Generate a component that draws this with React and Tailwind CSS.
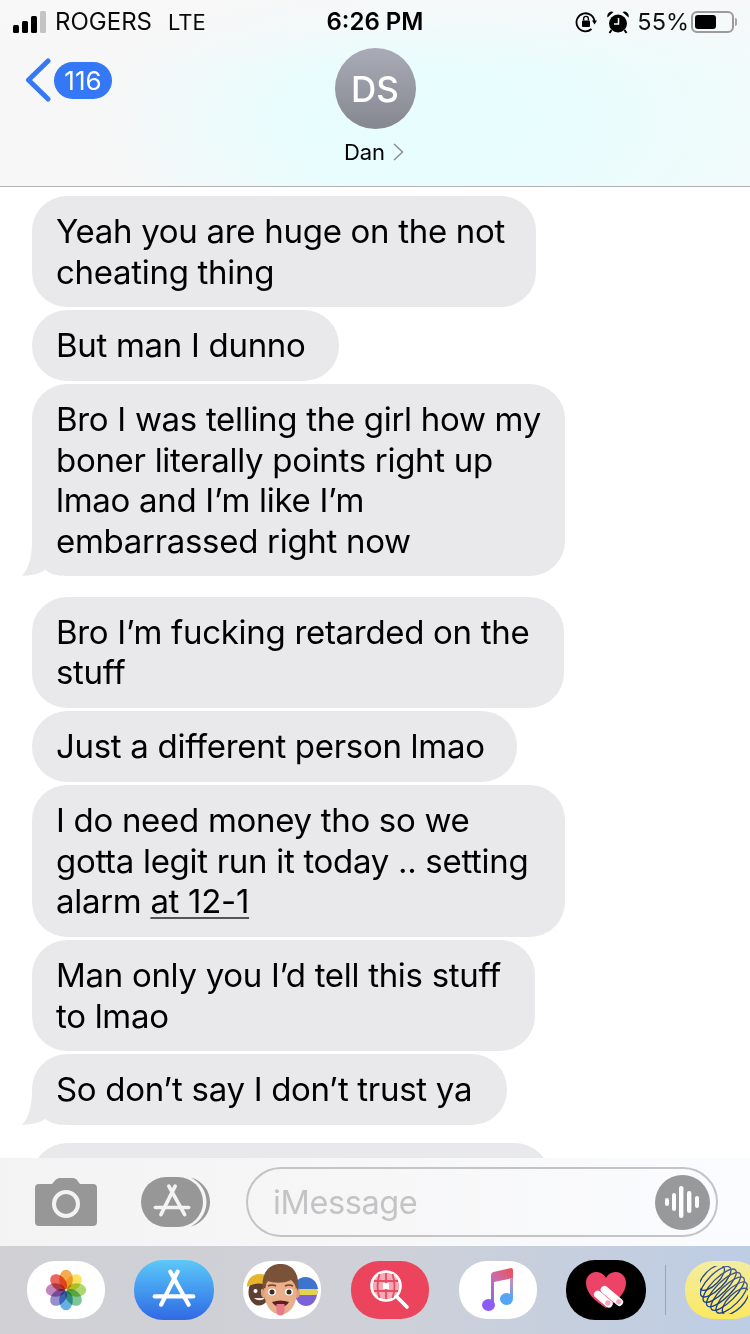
import React from "react";

const messages = [
  { w: "w-[504px]", lines: ["Yeah you are huge on the not", "cheating thing"], cls: "mb-[3px]" },
  { w: "w-[307px]", lines: ["But man I dunno"], cls: "mb-[3.5px]" },
  {
    w: "w-[533px]",
    lines: ["Bro I was telling the girl how my", "boner literally points right up", "lmao and I’m like I’m", "embarrassed right now"],
    cls: "mb-[20.5px]",
    tail: true,
  },
  { w: "w-[532px]", lines: ["Bro I’m fucking retarded on the", "stuff"], cls: "mb-[3.5px]" },
  { w: "w-[485px]", lines: ["Just a different person lmao"], cls: "mb-[3.5px]" },
  {
    w: "w-[533px]",
    lines: [
      "I do need money tho so we",
      "gotta legit run it today .. setting",
      <>
        alarm <span className="underline underline-offset-4 decoration-[#555] decoration-2">at 12-1</span>
      </>,
    ],
    cls: "mb-[3.5px]",
  },
  { w: "w-[503px]", lines: ["Man only you I’d tell this stuff", "to lmao"], cls: "mb-[3px]" },
  { w: "w-[475px]", lines: ["So don’t say I don’t trust ya"], cls: "mb-[18.5px]", tail: true },
];

function Tail() {
  return (
    <svg className="absolute left-[-10px] bottom-0" width="40" height="34" viewBox="0 0 40 34">
      <path d="M10 0 C10 14 7 27 0 33.6 C8 34 17 32 23 28 C27 31 32 33 40 34 L40 0 Z" fill="#e9e9eb" />
    </svg>
  );
}

function Bubble({ msg }) {
  return (
    <div className={`relative ${msg.w} ${msg.cls} bg-[#e9e9eb] rounded-[35px] pl-[24px] py-[15px] text-[33px] leading-[40.5px] tracking-[-0.3px] text-black`}>
      {msg.tail && <Tail />}
      <div className="relative whitespace-nowrap">
        {msg.lines.map((line, i) => (
          <div key={i}>{line}</div>
        ))}
      </div>
    </div>
  );
}

function SignalBars() {
  return (
    <svg width="34" height="22" viewBox="0 0 34 22">
      <rect x="0" y="14" width="6" height="8" rx="1.5" fill="#000" />
      <rect x="9" y="10" width="6" height="12" rx="1.5" fill="#000" />
      <rect x="18" y="5" width="6" height="17" rx="1.5" fill="#000" />
      <rect x="27" y="0" width="6" height="22" rx="1.5" fill="#c4c4c4" />
    </svg>
  );
}

function RotationLock() {
  return (
    <svg width="22" height="22" viewBox="0 0 22 22" fill="none">
      <path d="M19.5 11 A9 9 0 1 0 16.5 18" stroke="#000" strokeWidth="1.8" />
      <path d="M17 9.5 L22 9.5 L19.5 13.5 Z" fill="#000" />
      <rect x="7" y="9.5" width="8" height="6.5" rx="1" fill="#000" />
      <path d="M8.6 9.5 V7.8 a2.4 2.4 0 0 1 4.8 0 V9.5" stroke="#000" strokeWidth="1.4" />
    </svg>
  );
}

function Alarm() {
  return (
    <svg width="22" height="23" viewBox="0 0 22 23">
      <circle cx="11" cy="12.5" r="9" fill="#000" />
      <path d="M0.500 6.500 a4.500 4.500 0 0 1 6 -5.500 Z M21.500 6.500 a4.500 4.500 0 0 0 -6 -5.500 Z" fill="#000" />
      <path d="M4.500 19 L2.500 22 M17.500 19 L19.500 22" stroke="#000" strokeWidth="2" />
      <path d="M11.500 7 V13 H7" stroke="#fff" strokeWidth="1.500" fill="none" />
    </svg>
  );
}

function Battery() {
  return (
    <div className="flex items-center gap-[1px]">
      <div className="w-[43px] h-[22px] border-2 border-[#9b9b9b] rounded-[6px] p-[2px]">
        <div className="w-[21px] h-full bg-black rounded-[3px]" />
      </div>
      <div className="w-[2px] h-[8px] bg-[#a5a5a5] rounded-r-sm" />
    </div>
  );
}

function AppStoreGlyph({ size, color }) {
  return (
    <svg width={size} height={size} viewBox="0 0 48 48" fill="none" stroke={color} strokeWidth="4.600" strokeLinecap="round">
      <path d="M28 4 L10 40" />
      <path d="M20 4 L40 40" />
      <path d="M3 31 H45" />
    </svg>
  );
}

function AudioGlyph() {
  return (
    <svg width="38" height="34" viewBox="0 0 38 34" fill="#fff">
      <rect x="1" y="13" width="4" height="8" rx="2" />
      <rect x="8" y="8" width="4" height="18" rx="2" />
      <rect x="15" y="1" width="4.400" height="32" rx="2.200" />
      <rect x="23" y="6" width="4.400" height="22" rx="2.200" />
      <rect x="31" y="11" width="4" height="12" rx="2" />
    </svg>
  );
}

function Photos() {
  const petals = ["#f3a23c", "#f8e04e", "#a6d35f", "#6fc08a", "#55a9df", "#8b83cb", "#bb78b6", "#e9574a"];
  return (
    <svg width="42" height="42" viewBox="0 0 42 42">
      {petals.map((c, i) => (
        <ellipse key={c} className="mix-blend-multiply" cx="21" cy="10.500" rx="6.800" ry="9.800" fill={c} fillOpacity="0.9" transform={`rotate(${i * 45} 21 21)`} />
      ))}
    </svg>
  );
}

function Memoji() {
  return (
    <svg width="76" height="56" viewBox="0 0 76 56">
      {/* left face */}
      <ellipse cx="15" cy="30" rx="10.500" ry="13.500" fill="#5f3f30" />
      <path d="M3 25 C3 13 15 10 21 13 C26 15 27 20 26 25 C18 20 10 21 3 25 Z" fill="#e5b32c" />
      <circle cx="11.500" cy="29" r="2" fill="#fff" />
      <circle cx="19" cy="29" r="2" fill="#fff" />
      <path d="M10 36 C13 39 18 39 21 36 Z" fill="#efe6df" />
      {/* right face */}
      <ellipse cx="62" cy="31" rx="11" ry="13" fill="#7b62d8" />
      <path d="M51 27 C49 12 72 10 74 27 Z" fill="#3e74cf" />
      <rect x="53" y="27" width="21" height="6" rx="3" fill="#e6d24c" />
      {/* center face */}
      <g transform="translate(-3 0)">
        <ellipse cx="23" cy="31" rx="3" ry="5" fill="#e1a07a" />
        <ellipse cx="56" cy="31" rx="3" ry="5" fill="#e1a07a" />
        <ellipse cx="39.500" cy="32" rx="16" ry="20.500" fill="#e9ae8a" />
        <path d="M22 29 C19 9 30 1 41 2 C53 3 59 13 57 29 C54 22 52 20 50 18 C42 22 32 21 27 19 C25 22 23 25 22 29 Z" fill="#7a5237" />
        <path d="M27 24 Q31 22 35 24 M44 24 Q48 22 52 24" stroke="#6a452e" strokeWidth="1.500" fill="none" />
        <ellipse cx="31" cy="30" rx="4" ry="3.400" fill="#fff" />
        <ellipse cx="48" cy="30" rx="4" ry="3.400" fill="#fff" />
        <circle cx="31" cy="30" r="2.500" fill="#3a2a20" />
        <circle cx="48" cy="30" r="2.500" fill="#3a2a20" />
        <path d="M31 40 Q39.500 37 48 40 Q45 45 39.500 45 Q34 45 31 40 Z" fill="#5e1f22" />
        <path d="M35.500 42 H43.500 V49 a4 4.500 0 0 1 -8 0 Z" fill="#ea7a8a" />
      </g>
    </svg>
  );
}

function GlobeSearch() {
  return (
    <svg width="44" height="44" viewBox="0 0 44 44" fill="none">
      <circle cx="18" cy="18" r="14.500" stroke="#fff" strokeWidth="2.600" fill="#f4a9b4" />
      <path d="M18 5 V31 M6 13 H30 M6 23 H30 M11.500 6 C9 14 9 23 11.500 30 M24.500 6 C27 14 27 23 24.500 30" stroke="#ec4a62" strokeWidth="1.800" />
      <rect x="15" y="15" width="6" height="6" fill="#fff" />
      <path d="M29 29 L39 39" stroke="#fff" strokeWidth="3.600" strokeLinecap="round" />
    </svg>
  );
}

function MusicNote() {
  return (
    <svg width="32" height="46" viewBox="0 0 32 46">
      <defs>
        <linearGradient id="note" x1="0.800" y1="0" x2="0.200" y2="1">
          <stop offset="0" stopColor="#e8555f" />
          <stop offset="0.500" stopColor="#c96bb0" />
          <stop offset="1" stopColor="#8d66ee" />
        </linearGradient>
        <linearGradient id="note2" x1="0" y1="0" x2="0" y2="1">
          <stop offset="0" stopColor="#d98ab0" />
          <stop offset="1" stopColor="#55a5f5" />
        </linearGradient>
      </defs>
      <path d="M9 8 Q9 5.500 11.500 5 L29 1 Q31 1 31 3 V11 L12 15 V37 H9 Z" fill="url(#note)" />
      <ellipse cx="6.500" cy="38" rx="6.500" ry="6" fill="#8b5cf6" />
      <path d="M28 11 H31 V31 H28 Z" fill="url(#note2)" />
      <ellipse cx="24.500" cy="32" rx="6.500" ry="6" fill="#55a5f5" />
    </svg>
  );
}

function HeartBand() {
  return (
    <svg width="42" height="38" viewBox="0 0 42 38">
      <path d="M21 37 C10 30 1 22 1 12 C1 5 6 1 11 1 C15 1 19 3 21 7 C23 3 27 1 31 1 C36 1 41 5 41 12 C41 22 32 30 21 37 Z" fill="#ec4366" />
      <g transform="rotate(40 27 24)">
        <rect x="14" y="21" width="27" height="7.500" rx="3.750" fill="#fff" />
        <rect x="12" y="29" width="22" height="7.500" rx="3.750" fill="#fff" />
        <circle cx="36.500" cy="24.800" r="2.600" fill="#f6a6b8" />
        <circle cx="29" cy="32.800" r="2.600" fill="#f6a6b8" />
      </g>
    </svg>
  );
}

function WireGlobe() {
  const offsets = [-17, -11.500, -6, -0.500, 5, 10.500, 16];
  return (
    <svg width="48" height="48" viewBox="0 0 48 48" fill="none">
      <defs>
        <linearGradient id="wire" gradientUnits="userSpaceOnUse" x1="4" y1="44" x2="44" y2="4">
          <stop offset="0" stopColor="#163a8c" />
          <stop offset="0.450" stopColor="#1f3f8a" />
          <stop offset="1" stopColor="#5f6f90" />
        </linearGradient>
      </defs>
      {offsets.map((d) => {
        const cx = 24 + d * 0.72;
        const cy = 24 + d * 0.72;
        return (
          <ellipse
            key={d}
            cx={cx}
            cy={cy}
            rx={23 * Math.sqrt(1 - (d / 24) ** 2)}
            ry="7.500"
            stroke="url(#wire)"
            strokeWidth="1.300"
            transform={`rotate(-45 ${cx} ${cy})`}
          />
        );
      })}
    </svg>
  );
}

export default function App() {
  return (
    <div className="w-[750px] h-[1334px] flex flex-col overflow-hidden bg-white font-['Inter',sans-serif]">
      {/* HEADER */}
      <header className="h-[187px] shrink-0 border-b border-[#b2b2b2] bg-[linear-gradient(180deg,#f8f8f8cc_0px,#f8f8f800_70px),radial-gradient(ellipse_330px_150px_at_56%_65%,#e8fdfe_35%,#e8fdfe00_100%),linear-gradient(90deg,#f7f7f7_25%,#effbfb_60%,#f1fbfc_100%)]">
        {/* status bar */}
        <div className="h-[44px] grid grid-cols-3 items-center">
          <div className="flex items-center pl-[13px] gap-[8px] text-[24px] text-[#0a0a0a] whitespace-nowrap">
            <SignalBars />
            <span>ROGERS</span>
            <span className="ml-[8px] text-[22px]">LTE</span>
          </div>
          <div className="text-center text-[24px] font-semibold text-black">6:26 PM</div>
          <div className="flex items-center justify-end pr-[13px] text-[23.5px] text-[#111]">
            <RotationLock />
            <span className="ml-[10px] flex"><Alarm /></span>
            <span className="ml-[8px]">55%</span>
            <span className="ml-[2px] flex"><Battery /></span>
          </div>
        </div>

        {/* contact row */}
        <div className="relative flex flex-col items-center pt-[4px]">
          <div className="absolute left-[25px] top-[14px] flex items-center">
            <svg width="26" height="44" viewBox="0 0 26 44" fill="none">
              <path d="M23 3 L3.500 22 L23 41" stroke="#3478f6" strokeWidth="5" strokeLinecap="round" strokeLinejoin="round" />
            </svg>
            <div className="ml-[3px] w-[58px] h-[37px] rounded-full bg-[#3478f6] flex items-center justify-center text-[26px] text-white">116</div>
          </div>
          <div className="w-[81px] h-[81px] rounded-full bg-linear-to-b from-[#a9abb6] to-[#858791] flex items-center justify-center text-white text-[35px] font-medium pt-[2px]">
            DS
          </div>
          <div className="mt-[10px] -ml-[2px] flex items-center gap-[8px] text-[22px] leading-[26px] text-black">
            Dan
            <svg width="11" height="18" viewBox="0 0 11 18" fill="none">
              <path d="M1 1 L9.500 9 L1 17" stroke="#8e8e93" strokeWidth="1.500" />
            </svg>
          </div>
        </div>
      </header>

      {/* MESSAGES */}
      <main className="flex-1 min-h-0 overflow-hidden pt-[9px] pl-[32px]">
        {messages.map((msg, i) => (
          <Bubble key={i} msg={msg} />
        ))}
        <div className="w-[518px] h-[100px] bg-[#e9e9eb] rounded-[35px]" />
      </main>

      {/* INPUT BAR */}
      <div className="h-[88px] shrink-0 flex items-center pl-[35px] bg-linear-to-r from-[#f3f3f3] via-[#f7f7f8] to-[#fbfcff]">
        <svg width="62" height="48" viewBox="0 0 62 48" className="shrink-0">
          <path d="M4 6 H17 L21 1.500 Q22.500 0 24.500 0 H38 Q40 0 41.500 1.500 L45 6 H58 Q62 6 62 10 V44 Q62 48 58 48 H4 Q0 48 0 44 V10 Q0 6 4 6 Z" fill="#979797" />
          <circle cx="31" cy="26" r="12" fill="none" stroke="#f3f3f3" strokeWidth="4" />
        </svg>
        <div className="relative ml-[44px] w-[70px] h-[50px] shrink-0">
          <svg className="absolute right-0 top-0" width="30" height="50" viewBox="0 0 30 50">
            <path d="M10 0.500 C22 4 29 14 29 25 C29 36 22 46 10 49.500 C20 44 25.500 35 25.500 25 C25.500 15 20 6 10 0.500 Z" fill="#9a9a9a" />
          </svg>
          <div className="w-[62px] h-[50px] rounded-[25px] bg-[#979797] flex items-center justify-center">
            <AppStoreGlyph size={38} color="#f3f3f3" />
          </div>
        </div>
        <div className="ml-[35px] w-[472px] h-[70px] shrink-0 rounded-full border-2 border-[#c4c4c4] flex items-center justify-between pl-[25px] pr-[6px]">
          <span className="pt-[3px] text-[32.5px] tracking-[-0.4px] text-[#c4c4c6]">iMessage</span>
          <div className="w-[55px] h-[55px] rounded-full bg-[#98999b] flex items-center justify-center">
            <AudioGlyph />
          </div>
        </div>
      </div>

      {/* APP DRAWER */}
      <div className="h-[88px] shrink-0 flex items-center pl-[27px] bg-linear-to-r from-[#d0d0d5] via-[#cfd1d8] to-[#bdcde4] overflow-hidden">
        <div className="w-[78px] h-[58px] shrink-0 rounded-[28px] bg-white flex items-center justify-center"><Photos /></div>
        <div className="ml-[29px] w-[80px] h-[60px] shrink-0 rounded-[29px] bg-linear-to-b from-[#5ec8f8] to-[#3268e4] flex items-center justify-center"><AppStoreGlyph size={44} color="#fff" /></div>
        <div className="ml-[29px] w-[78px] h-[58px] shrink-0 rounded-[28px] bg-white flex items-center justify-center"><Memoji /></div>
        <div className="ml-[30px] w-[78px] h-[58px] shrink-0 rounded-[28px] bg-[#ec445c] flex items-center justify-center"><GlobeSearch /></div>
        <div className="ml-[30px] w-[78px] h-[58px] shrink-0 rounded-[28px] bg-white flex items-center justify-center"><MusicNote /></div>
        <div className="ml-[29px] w-[80px] h-[60px] shrink-0 rounded-[29px] bg-black flex items-center justify-center"><HeartBand /></div>
        <div className="ml-[19px] w-[1px] h-[50px] shrink-0 bg-[#9aa5b5]" />
        <div className="ml-[19px] w-[78px] h-[58px] shrink-0 rounded-[28px] bg-linear-to-b from-[#f3eda0] to-[#fbe85e] flex items-center justify-center"><WireGlobe /></div>
      </div>
    </div>
  );
}
